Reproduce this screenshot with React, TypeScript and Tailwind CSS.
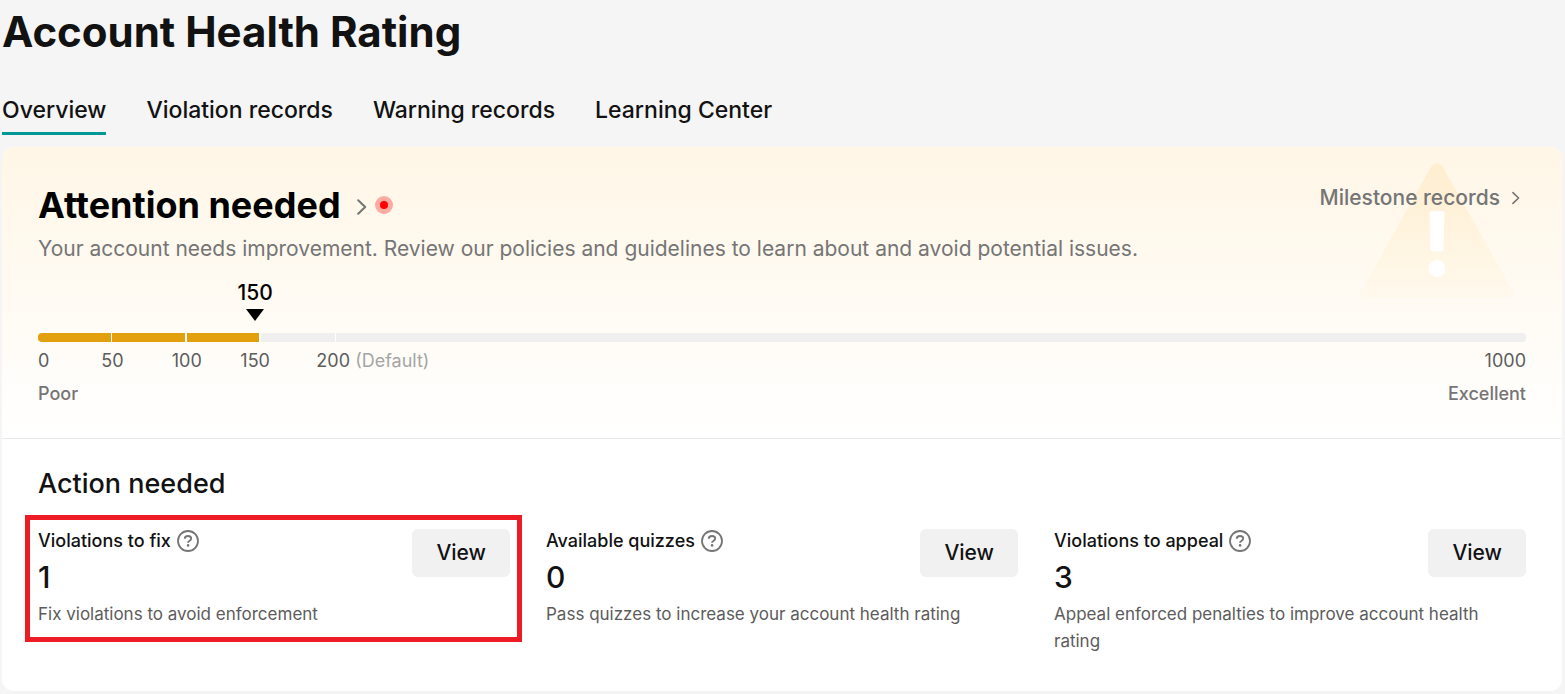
import type { ReactNode } from "react";

interface ActionCardProps {
    title: string
    count: number
    description: string
    highlighted?: boolean
}

const tabs = ["Overview", "Violation records", "Warning records", "Learning Center"];

const actions: ActionCardProps[] = [
    { title: "Violations to fix", count: 1, description: "Fix violations to avoid enforcement", highlighted: true },
    { title: "Available quizzes", count: 0, description: "Pass quizzes to increase your account health rating" },
    { title: "Violations to appeal", count: 3, description: "Appeal enforced penalties to improve account health rating" },
];

function Chevron({ className }: { className: string }) {
    return (
        <svg viewBox="0 0 10 16" fill="none" stroke="currentColor" strokeWidth="2" strokeLinecap="round" strokeLinejoin="round" className={className} aria-hidden="true">
            <path d="M1.2 1.2 8.2 8 1.2 14.8" />
        </svg>
    );
}

function HelpIcon() {
    return (
        <svg viewBox="0 0 22 22" fill="none" stroke="#757575" className="size-[22px] shrink-0" aria-hidden="true">
            <circle cx="11" cy="11" r="10" strokeWidth="1.8" />
            <path d="M7.8 8.8c0-1.8 1.4-2.8 3.2-2.8s3.2 1 3.2 2.6c0 1.3-.9 1.9-1.8 2.4-.8.4-1.3.8-1.3 1.7" strokeWidth="1.9" />
            <circle cx="11.1" cy="15.4" r="1.3" fill="#757575" stroke="none" />
        </svg>
    );
}

function WarningTriangle() {
    return (
        <svg viewBox="0 0 152 136" className="absolute top-4 right-[49px] h-[136px] w-[152px]" aria-hidden="true">
            <defs>
                <linearGradient id="triangle" x1="0" y1="0" x2="0" y2="1">
                    <stop offset="0" stopColor="#ffeecf" />
                    <stop offset="1" stopColor="#fff9ed" />
                </linearGradient>
            </defs>
            <path d="M71 2.600Q76-2 81 2.600L150.500 126Q154 134 146 134.500H6Q-2 134 1.500 126Z" fill="url(#triangle)" />
            <path d="M70.500 48h11q2 0 2 2l-1 36q-.2 2.500-2.500 2.500h-8q-2.300 0-2.500-2.500l-1-36q0-2 2-2Z" fill="#fff" />
            <circle cx="76" cy="105.500" r="8.500" fill="#fff" />
        </svg>
    );
}

function ScaleLabel({ children }: { children: ReactNode }) {
    return <span className="w-[5%] text-center">{children}</span>;
}

function RatingScale() {
    return (
        <div className="mt-3.5 text-lg leading-6 text-[#5c5c5c]">
            <div className="flex">
                <div className="w-[12.5%]" />
                <div className="flex w-[5%] flex-col items-center pr-3 text-black">
                    <span className="text-[21px] leading-7 font-medium">150</span>
                    <svg viewBox="0 0 18 12" className="mt-0.5 h-3 w-[18px]" aria-hidden="true">
                        <path d="M0 0h18L9 12Z" fill="currentColor" />
                    </svg>
                </div>
            </div>

            <div className="mt-3 flex h-[9px] overflow-hidden rounded-sm">
                <div className="w-[5%] border-r border-white bg-[#e2a00f]" />
                <div className="w-[5%] border-r-2 border-white bg-[#e2a00f]" />
                <div className="w-[5%] border-r-2 border-white bg-[#e2a00f]" />
                <div className="w-[5%] border-r border-white bg-[#efefef]" />
                <div className="flex-1 bg-[#efefef]" />
            </div>

            <div className="mt-[7px] flex">
                <span className="w-[2.5%]">0</span>
                <ScaleLabel>50</ScaleLabel>
                <ScaleLabel>100</ScaleLabel>
                <span className="w-[5%] pr-3 text-center">150</span>
                <span className="pl-[18px]">200 <span className="text-[#a5a5a5]">(Default)</span></span>
                <span className="ml-auto">1000</span>
            </div>

            <div className="mt-[9px] flex justify-between font-medium text-[#757575]">
                <span>Poor</span>
                <span>Excellent</span>
            </div>
        </div>
    );
}

function ActionCard(props: ActionCardProps) {
    return (
        <div className="relative">
            {props.highlighted && (
                <div className="pointer-events-none absolute -inset-y-3.5 -right-3 -left-[13px] border-5 border-[#ed1c24]" />
            )}
            <div className="flex items-start justify-between">
                <div>
                    <div className="flex items-center gap-1.5">
                        <h3 className="text-lg leading-6 font-medium text-[#121212]">{props.title}</h3>
                        <HelpIcon />
                    </div>
                    <p className="mt-1 text-[30px] leading-10 font-medium text-[#121212]">{props.count}</p>
                </div>
                <button className="h-12 rounded-md bg-[#f1f1f2] px-6 text-[21px] font-medium text-[#121212]">View</button>
            </div>
            <p className="mt-1 text-[17px] leading-[27px] text-[#5c5c5c]">{props.description}</p>
        </div>
    );
}

export default function App() {
    return (
        <main className="min-h-screen bg-[#f5f5f5] px-0.5 pb-0.5 font-['Inter',sans-serif] text-[#121212]">
            <h1 className="pt-1 text-[42px] leading-14 font-bold">Account Health Rating</h1>

            <nav className="mt-8 flex gap-10 text-[23px] leading-9 font-medium">
                {tabs.map((tab) => (
                    <a
                        key={tab}
                        href="#"
                        className={tab == "Overview" ? "border-b-3 border-[#009995] pb-1" : "border-b-3 border-transparent pb-1"}
                    >
                        {tab}
                    </a>
                ))}
            </nav>

            <div className="mt-3 mr-px overflow-hidden rounded-xl bg-white">
                <section className="relative border-b border-[#ebebeb] bg-linear-to-b from-[#fff6e6] to-white px-9 pt-9 pb-8">
                    <WarningTriangle />
                    <div className="relative flex items-start justify-between">
                        <a href="#" className="flex items-center text-black">
                            <h2 className="text-4xl leading-11 font-bold">Attention needed</h2>
                            <Chevron className="mt-1 ml-4 h-4 w-2.5 text-[#757575]" />
                            <span className="ml-2 size-[18px] rounded-full border-5 border-[#ffa9a3] bg-[#ff0000]" />
                        </a>
                        <a href="#" className="mr-1.5 flex items-center gap-3 text-[21px] leading-[30px] font-medium text-[#757575]">
                            Milestone records
                            <Chevron className="h-3.5 w-2" />
                        </a>
                    </div>
                    <p className="relative mt-1.5 text-[21px] leading-8 text-[#757575]">
                        Your account needs improvement. Review our policies and guidelines to learn about and avoid potential issues.
                    </p>
                    <RatingScale />
                </section>

                <section className="px-9 pt-[25px] pb-9">
                    <h2 className="text-[27px] leading-10 font-medium">Action needed</h2>
                    <div className="mt-[25px] grid grid-cols-3 items-start gap-9">
                        {actions.map((action) => (
                            <ActionCard key={action.title} {...action} />
                        ))}
                    </div>
                </section>
            </div>
        </main>
    );
}
